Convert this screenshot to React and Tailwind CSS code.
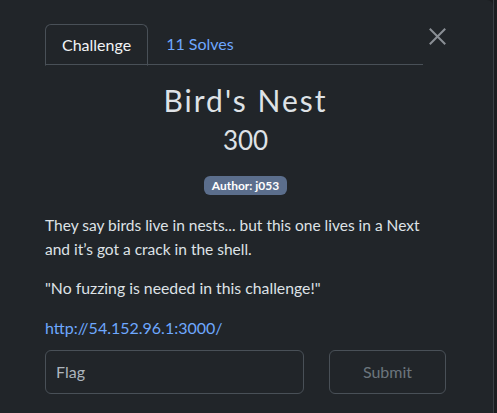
import React from "react";

export default function App() {
  return (
    <div
      className="h-[413px] w-[497px] overflow-hidden bg-[#1b1d20] flex"
      style={{ fontFamily: "Lato, 'Open Sans', sans-serif" }}
    >
      <div className="w-[493px] h-full bg-[#212529] rounded-tr-md text-[#dee2e6] pl-[45px] pr-[47px] pt-[24px]">
        <div className="flex items-end">
          <div className="flex flex-1 border-b border-[#495057] h-[41px]">
            <div className="h-[42px] px-4 flex items-center border border-[#495057] border-b-[#212529] rounded-t-md text-[16px] text-[#f1f3f5] -mb-px">
              Challenge
            </div>
            <div className="px-[18px] flex items-center text-[16px] text-[#6ea8fe]">11 Solves</div>
          </div>
          <div className="w-[23px] self-start flex justify-end pt-[4px]">
            <svg width="17" height="17" viewBox="0 0 17 17" fill="none" stroke="#8a8f95" strokeWidth="2" strokeLinecap="square">
              <path d="M1.5 1.5 L15.5 15.5 M15.5 1.5 L1.5 15.5" />
            </svg>
          </div>
        </div>

        <div className="flex flex-col items-center">
          <h1 className="mt-[15px] text-[30px] leading-[40px] tracking-[2px] text-[#dee2e6]">Bird's Nest</h1>
          <div className="text-[26px] leading-[34px] text-[#dee2e6] mt-[3px]">300</div>
          <span className="mt-[19px] rounded-md bg-[#5b6e8c] px-[8px] h-[19px] flex items-center text-[12px] font-bold text-white">
            Author: j053
          </span>
        </div>

        <div className="mt-[18px] text-[15.5px] leading-[24px] text-[#dee2e6]">
          <p>They say birds live in nests... but this one lives in a Next and it’s got a crack in the shell.</p>
          <p className="mt-[15px] text-[15.8px]">"No fuzzing is needed in this challenge!"</p>
          <p className="mt-[16px] text-[16px]">
            <a className="text-[#6ea8fe]">http://54.152.96.1:3000/</a>
          </p>
        </div>

        <div className="mt-[10px] flex gap-[25px]">
          <div className="w-[259px] h-[44px] rounded-md border border-[#495057] px-[10px] flex items-center text-[16px] text-[#adb5bd]">
            Flag
          </div>
          <div className="w-[117px] h-[44px] rounded-md border border-[#495057] flex items-center justify-center text-[16px] text-[#6c757d]">
            Submit
          </div>
        </div>
      </div>
      <div className="flex-1 border-l border-[#3a3f44]" />
    </div>
  );
}
